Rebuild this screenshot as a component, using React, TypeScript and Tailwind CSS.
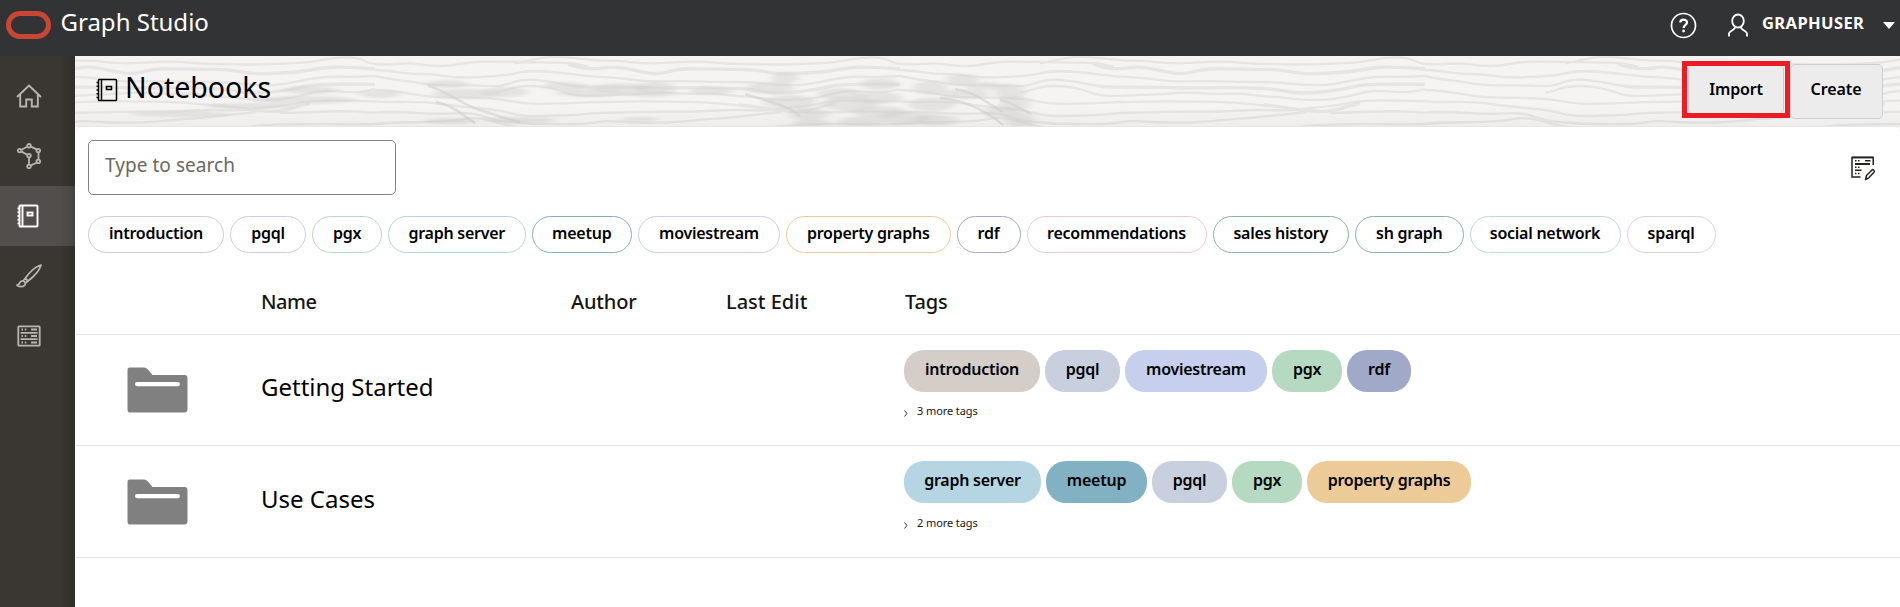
import React from "react";

type Tag = { label: string; box: string };

const filterTags: Tag[] = [
  { label: "introduction", box: "w-[136px] border-[#d4cdc7]" },
  { label: "pgql", box: "w-[76px] border-[#c8cfdf]" },
  { label: "pgx", box: "w-[70px] border-[#b6dac2]" },
  { label: "graph server", box: "w-[137.5px] border-[#b4d6e0]" },
  { label: "meetup", box: "w-[100.5px] border-[#81b1c3]" },
  { label: "moviestream", box: "w-[142px] border-[#c6cfec]" },
  { label: "property graphs", box: "w-[164.5px] border-[#edcb96]" },
  { label: "rdf", box: "w-[64px] border-[#a0a9c7]" },
  { label: "recommendations", box: "w-[180px] border-[#efc9d5]" },
  { label: "sales history", box: "w-[136.5px] border-[#86b898]" },
  { label: "sh graph", box: "w-[108.5px] border-[#85b3b3]" },
  { label: "social network", box: "w-[151px] border-[#bddadb]" },
  { label: "sparql", box: "w-[89px] border-[#dfcdec]" },
];

const folders: { name: string; more: string; tags: Tag[] }[] = [
  {
    name: "Getting Started",
    more: "3 more tags",
    tags: [
      { label: "introduction", box: "w-[136px] bg-[#d4cdc8]" },
      { label: "pgql", box: "w-[75px] bg-[#c8cfdf]" },
      { label: "moviestream", box: "w-[142px] bg-[#c6cfed]" },
      { label: "pgx", box: "w-[70px] bg-[#b6d9c2]" },
      { label: "rdf", box: "w-[64px] bg-[#a0a9c7]" },
    ],
  },
  {
    name: "Use Cases",
    more: "2 more tags",
    tags: [
      { label: "graph server", box: "w-[137px] bg-[#b4d5e1]" },
      { label: "meetup", box: "w-[101px] bg-[#81b1c3]" },
      { label: "pgql", box: "w-[75px] bg-[#c8cfdf]" },
      { label: "pgx", box: "w-[70px] bg-[#b6d9c2]" },
      { label: "property graphs", box: "w-[164px] bg-[#edcb98]" },
    ],
  },
];

const HomeIcon = () => (
  <svg width="26" height="24" viewBox="0 0 26 24" fill="none" stroke="#b8b5b1" strokeWidth="1.9">
    <path d="M1 13 13 1.5 25 13M4.2 10.5V22.5H10.2V15.5H15.8V22.5H21.8V10.5" />
  </svg>
);

const GraphIcon = () => (
  <svg width="24" height="26" viewBox="0 0 24 26" fill="none" stroke="#b8b5b1" strokeWidth="1.8">
    <path d="M4.2 7 10 3.8M14 3.6 20 6.6M21.5 9.5V16.5M20 19.5 14 22.4M12 21V14.5M10.2 11.8 4.2 8.4" />
    <circle cx="2.6" cy="7.6" r="1.8" />
    <circle cx="12" cy="2.8" r="1.8" />
    <circle cx="21.3" cy="7.6" r="1.8" />
    <circle cx="12" cy="12.6" r="1.8" />
    <circle cx="21.3" cy="18.4" r="1.8" />
    <circle cx="12" cy="23.4" r="1.8" />
  </svg>
);

const NotebookIcon = ({ stroke, width }: { stroke: string; width: number }) => (
  <svg width="22" height="24" viewBox="0 0 22 24" fill="none" stroke={stroke} strokeWidth={width}>
    <rect x="2.500" y="1.500" width="18" height="21" rx="0.8" />
    <path d="M5.500 1.5V22.5M0.5 4.5H3M0.5 8.2H3M0.5 12H3M0.5 15.7H3M0.5 19.4H3" />
    <rect x="10.500" y="8.500" width="5" height="3" />
  </svg>
);

const BrushIcon = () => (
  <svg width="26" height="24" viewBox="0 0 26 24" fill="none" stroke="#b8b5b1" strokeWidth="1.8" strokeLinejoin="round">
    <path d="M25 1C20 2.5 14 7.500 9.300 14.300L12 17C18 12.500 23.500 6.500 25 1ZM9.300 14.300 7.300 16.800M12 17 9.300 19M5.200 17.200C7.500 16 10.300 18.400 9 20.800 7.500 23.200 4 23.300 1 21.200 3.800 20.800 3.300 18.300 5.200 17.200Z" />
  </svg>
);

const JobsIcon = () => (
  <svg width="24" height="22" viewBox="0 0 24 22" fill="none" stroke="#b8b5b1" strokeWidth="1.8">
    <rect x="1.3" y="1.300" width="21.400" height="19.400" rx="0.800" />
    <path d="M3.500 7.800H20.500M3.500 14.200H20.500" />
    <path d="M4.500 4.500H6M7.800 4.500H9.300M14 4.500H20M4.500 11H6M7.800 11H9.300M14 11H20M4.500 17.500H6M7.800 17.500H9.300M14 17.500H20" />
  </svg>
);

const EditListIcon = () => (
  <svg width="25" height="25" viewBox="0 0 25 25" fill="none" stroke="#26231f" strokeWidth="1.500">
    <path d="M22.200 9V1.500H1V21H9.500" />
    <path d="M1 1.300H22.200M4 8H19" strokeWidth="1.800" />
    <path d="M4 4.800H5.500M7 4.800H8.500M14 4.800H19.500M4 11.300H5.500M7 11.300H8.500M4 14.300H10.500M4 17.500H5.500M7 17.500H8.500" />
    <path d="M14.500 23.500 15.500 19.500 21 14C22 13 24.200 14.800 23 16.200L17.800 21.800Z" strokeLinejoin="round" />
  </svg>
);

const FolderIcon = () => (
  <svg width="61" height="46" viewBox="0 0 61 46">
    <path
      d="M3 .500H17Q19 .500 20.500 2L25.500 8H57.500Q60.500 8 60.500 11V42.500Q60.500 45.500 57.500 45.500H3Q.500 45.500 .500 42.500V3Q.500 .500 3 .500Z"
      fill="#808080"
    />
    <rect x="8" y="15" width="45" height="4.200" rx="2.100" fill="#fff" />
  </svg>
);

const grain = [
  "M0 42C50 46 70 40 100 40S150 49 200 48 260 36 320 35 450 36 540 38 600 44 640 50",
  "M420 40C460 34 500 20 540 20S640 32 700 32 780 41 840 40 900 35 960 35 1040 42 1100 42 1180 45 1240 43 1300 42 1360 38 1430 22 1490 22 1540 40 1575 42",
  "M0 60C60 62 80 72 140 72S220 86 290 82 380 80 420 70 500 62 560 69 640 80 700 82 780 95 840 94 950 92 1000 95 1100 93 1150 99 1220 106 1270 105 1340 92 1400 84 1480 84 1575 78",
  "M0 78C60 92 80 90 140 100S260 104 320 107 380 108 420 95 500 92 540 98 580 110 640 110",
  "M360 128C400 122 410 108 460 108S540 116 580 130 680 135 750 134 820 127 870 128 930 134 980 131 1060 138 1110 140 1190 150 1240 150 1340 142 1380 130 1440 124 1500 126 1550 118 1575 118",
  "M0 120C80 120 120 140 200 142S340 140 400 152 500 162 560 160 700 154 800 154 940 154 1000 158 1060 163 1120 168",
  "M0 154C60 160 130 150 200 162S360 175 400 188 470 199 560 196 620 189 700 188 820 184 900 185 1020 180 1080 180 1160 184 1200 178 1300 170 1340 160 1440 150 1575 154",
  "M0 188C80 180 160 196 240 190S330 210 400 216 520 224 600 222 660 211 720 214 820 220 880 217 960 210 1020 206 1140 194 1220 186",
  "M1290 188C1350 190 1440 182 1500 184S1550 188 1575 188",
  "M0 222C100 212 180 222 260 208S360 226 440 232M1200 230C1300 216 1450 226 1575 222",
];

const boldGrain = [
  "M580 42C620 60 660 58 700 52S780 66 830 70 880 58 930 57 1040 58 1100 58 1180 72 1240 71 1330 69 1380 60 1460 48 1575 57",
  "M600 110C660 113 750 110 820 113S980 110 1080 115 1160 130 1210 129 1300 124 1350 112 1440 102 1575 103",
  "M1090 165C1150 168 1190 182 1250 184S1320 172 1380 160",
];

/* dense knots, in page pixels: cx, cy, rx, ry */
const knots: [number, number, number, number][] = [
  [310, 34, 28, 4], [305, 44, 50, 4], [250, 50, 44, 3], [380, 38, 20, 4], [180, 58, 50, 3],
  [447, 28, 22, 4], [465, 38, 32, 5], [505, 36, 24, 5], [565, 30, 22, 4], [590, 37, 34, 4],
  [620, 32, 28, 5], [655, 32, 20, 6], [650, 38, 28, 3], [712, 35, 22, 4], [770, 32, 24, 6],
  [785, 22, 13, 6], [790, 46, 26, 7], [808, 58, 20, 6], [812, 67, 18, 4], [840, 38, 22, 6],
  [850, 48, 28, 7], [880, 28, 18, 6], [878, 42, 24, 6], [880, 56, 26, 6], [905, 62, 26, 7],
  [930, 32, 17, 7], [932, 48, 24, 7], [962, 24, 16, 6], [965, 38, 24, 5], [935, 64, 22, 6],
  [1010, 36, 15, 8], [1015, 48, 15, 8], [1020, 64, 15, 8], [860, 66, 22, 5], [450, 65, 26, 3],
  [520, 64, 36, 3], [640, 63, 18, 2], [985, 30, 18, 4], [1000, 56, 16, 6],
];

const WoodBanner = () => (
  <svg className="absolute inset-0" width="1825" height="71" viewBox="0 0 1825 71" fill="none">
    <defs>
      <filter id="soft" x="-5%" y="-5%" width="110%" height="110%">
        <feGaussianBlur stdDeviation="0.600" />
      </filter>
      <filter id="softer" x="-5%" y="-20%" width="110%" height="140%">
        <feGaussianBlur stdDeviation="4 1" />
      </filter>
      <linearGradient id="fade" x1="0" y1="0" x2="0" y2="1">
        <stop offset="0.700" stopColor="#000" stopOpacity="0" />
        <stop offset="1" stopColor="#000" stopOpacity="0.030" />
      </linearGradient>
    </defs>
    <rect width="1825" height="71" fill="#f5f4f2" />
    <g filter="url(#soft)" stroke="#e6e5e3">
      {[-225, 300, 825, 1350].map((x) => (
        <g key={x} transform={`translate(${x} -6) scale(.33333)`}>
          {grain.map((d) => (
            <path key={d} d={d} strokeWidth="7" />
          ))}
          {boldGrain.map((d) => (
            <path key={d} d={d} strokeWidth="10" />
          ))}
        </g>
      ))}
    </g>
    <g filter="url(#softer)" fill="#d3d2d0" fillOpacity="0.500" transform="translate(-75 0)">
      {knots.map(([cx, cy, rx, ry]) => (
        <ellipse key={`${cx}-${cy}`} cx={cx} cy={cy} rx={rx} ry={ry} />
      ))}
    </g>
    <g filter="url(#soft)" stroke="#d2d1cf" strokeOpacity="0.600" strokeWidth="2.600" transform="translate(-75 0)">
      <path d="M428 30C445 33 460 48 480 54S505 63 520 66M436 46C455 50 460 58 475 67" />
      <path d="M745 38C770 46 790 50 800 60M940 42C965 44 985 54 1003 69M955 33C975 36 985 46 1003 56M1000 44C1015 47 1020 54 1032 58" />
    </g>
    <rect width="1825" height="71" fill="url(#fade)" />
  </svg>
);

function Sidebar() {
  const item = "flex h-[60px] items-center pl-[15.5px]";
  return (
    <nav className="flex w-[75px] shrink-0 flex-col bg-gradient-to-r from-[#3a3632] from-80% to-[#322f2b] pt-[10px]">
      <div className={item}><HomeIcon /></div>
      <div className="flex h-[60px] items-center pl-[17px]"><GraphIcon /></div>
      <div className="flex h-[60px] items-center bg-gradient-to-r from-[#524e4b] from-80% to-[#484441] pl-[17px]">
        <NotebookIcon stroke="#fff" width={1.9} />
      </div>
      <div className={item}><BrushIcon /></div>
      <div className="flex h-[60px] items-center pb-px pl-[16.5px]"><JobsIcon /></div>
    </nav>
  );
}

export default function App() {
  return (
    <div className="flex h-[607px] w-[1900px] flex-col overflow-hidden bg-white font-['Noto_Sans',sans-serif] text-black">
      <header className="flex h-14 shrink-0 items-start bg-[#323335] text-white">
        <div className="mt-[11px] ml-[6px] h-7 w-[45px] rounded-full border-[5px] border-[#c74634]" />
        <div className="mt-[6px] ml-[9.5px] text-[24px] leading-8">Graph Studio</div>
        <div className="mt-3 ml-auto flex w-[229px] items-start">
          <svg width="27" height="27" viewBox="0 0 27 27" fill="none" stroke="#fff" strokeWidth="1.700" className="-ml-px">
            <circle cx="13.500" cy="13.500" r="12" />
            <path d="M10.300 10.600C10.300 6.600 17 6.600 17 10.400 17 13 13.600 12.800 13.600 16" strokeWidth="2.200" />
            <circle cx="13.600" cy="19" r="1.400" fill="#fff" stroke="none" />
          </svg>
          <svg width="20" height="24" viewBox="0 0 20 24" fill="none" stroke="#fff" strokeWidth="1.800" className="mt-[1px] ml-[31px]">
            <ellipse cx="10" cy="8" rx="5.800" ry="6.500" />
            <path d="M1 23.500V20.500C1 18.500 5 18 7.200 14.500M19 23.500V20.500C19 18.500 15 18 12.800 14.500" />
          </svg>
          <div className="ml-[14px] w-[103px] text-[16.5px] leading-[22px] font-bold tracking-[0.4px] whitespace-nowrap">GRAPHUSER</div>
          <svg width="12" height="7" viewBox="0 0 12 7" className="mt-[10px] ml-[18px]">
            <path d="M0 0H12L6 7Z" fill="#fff" />
          </svg>
        </div>
      </header>

      <div className="flex min-h-0 flex-1">
        <Sidebar />
        <main className="flex min-w-0 flex-1 flex-col">
          <div className="relative h-[71px] shrink-0">
            <WoodBanner />
            <div className="relative flex items-start pl-[21px]">
              <div className="mt-[22px]"><NotebookIcon stroke="#000" width={1.5} /></div>
              <h1 className="mt-[11px] ml-[7px] text-[28.5px] leading-10">Notebooks</h1>
              <div className="mt-[5px] mr-[17px] ml-auto flex">
                <div className="z-10 box-border flex h-[57px] w-[108px] border-[5px] border-[#ed1c24] bg-[#f0efee] px-px">
                  <button className="flex-1 rounded border border-y-0 border-[#c9c9c9] bg-[#ececec] pb-[2px] text-[16px] font-semibold tracking-[-0.2px]">Import</button>
                </div>
                <button className="mt-[3px] h-[55px] w-[93px] rounded-[5px] border border-[#cdcfd1] bg-[#ececec] pr-px pb-[6px] text-[16px] font-semibold tracking-[-0.1px]">Create</button>
              </div>
            </div>
          </div>

          <section className="z-10 -mt-px ml-px flex flex-1 flex-col">
            <div className="rounded-t-md border-t border-[#e8e7e6] bg-white px-3 pt-[13px]">
              <div className="flex items-start justify-between">
                <div className="flex h-[55px] w-[308px] items-center rounded-[5px] border border-[#85817e] pb-[5px] pl-4 text-[19px] tracking-[0.05px] text-[#6b6864]">
                  Type to search
                </div>
                <div className="mt-4 mr-3"><EditListIcon /></div>
              </div>
              <div className="mt-[21px] flex gap-1.5">
                {filterTags.map((t) => (
                  <span
                    key={t.label}
                    className={`flex h-[37px] shrink-0 items-center justify-center rounded-full border pb-[3px] text-[16px] font-semibold tracking-[-0.25px] whitespace-nowrap ${t.box}`}
                  >
                    {t.label}
                  </span>
                ))}
              </div>
            </div>

            <div className="flex h-[82px] items-start border-b border-[#e2e2e2] pt-[35px] pl-[185px] text-[20px] leading-7 font-medium tracking-[-0.15px] text-[#161513]">
              <div className="w-[310px] tracking-[-0.5px]">Name</div>
              <div className="w-[155px]">Author</div>
              <div className="w-[178px] tracking-[0px]">Last Edit</div>
              <div className="pl-px">Tags</div>
            </div>

            {folders.map((f, i) => (
              <div
                key={f.name}
                className={`flex items-start border-b border-[#e2e2e2] ${i === 0 ? "h-[111px]" : "h-[112px]"}`}
              >
                <div className={`w-[185px] pl-[51px] ${i === 0 ? "pt-8" : "pt-[33px]"}`}><FolderIcon /></div>
                <div className={`w-[643px] text-[24px] leading-8 ${i === 0 ? "pt-[36px]" : "pt-[37px]"}`}>{f.name}</div>
                <div className="pt-[15px]">
                  <div className="flex gap-[5px]">
                    {f.tags.map((t) => (
                      <span
                        key={t.label}
                        className={`flex h-[42px] items-center justify-center rounded-[20px] pb-[5px] text-[16px] font-semibold tracking-[-0.25px] whitespace-nowrap ${t.box}`}
                      >
                        {t.label}
                      </span>
                    ))}
                  </div>
                  <div className={`flex items-start text-[11px] leading-4 tracking-[-0.1px] text-[#161513] ${i === 0 ? "mt-[11px]" : "mt-3"}`}>
                    <svg width="4" height="7" viewBox="0 0 4 7" fill="none" stroke="#333" className="mt-[7px] mr-[9px]">
                      <path d="M.500 .500 3 3.500 .500 6.500" />
                    </svg>
                    {f.more}
                  </div>
                </div>
              </div>
            ))}
          </section>
        </main>
      </div>
    </div>
  );
}
